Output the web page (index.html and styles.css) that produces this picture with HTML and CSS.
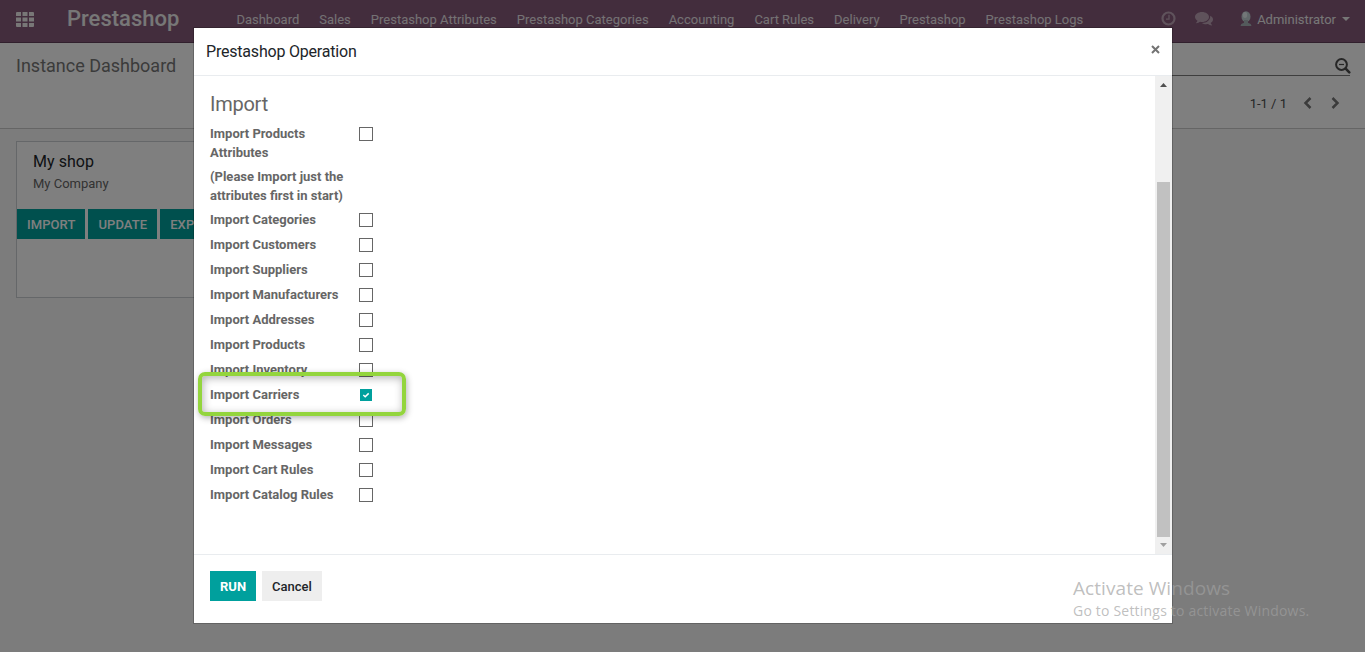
FILE: index.html
```html
<!DOCTYPE html>
<html lang="en">
<head>
<meta charset="utf-8">
<title>Prestashop</title>
<link rel="stylesheet" href="styles.css">
</head>
<body>
<div class="app">
  <header class="navbar">
    <svg class="apps" width="18" height="15" viewBox="0 0 18 15"><path d="M0 1a1 1 0 0 1 1-1h4v4H0zM6.500 0h5v4h-5zM13 0h4a1 1 0 0 1 1 1v3h-5zM0 5.500h5v4H0zM6.500 5.500h5v4h-5zM13 5.500h5v4h-5zM0 11h5v4H1a1 1 0 0 1-1-1zM6.500 11h5v4h-5zM13 11h5v3a1 1 0 0 1-1 1h-4z"/></svg>
    <div class="brand">Prestashop</div>
    <nav class="menu">
      <a>Dashboard</a><a>Sales</a><a>Prestashop Attributes</a><a>Prestashop Categories</a><a>Accounting</a><a>Cart Rules</a><a>Delivery</a><a>Prestashop</a><a>Prestashop Logs</a>
    </nav>
    <div class="systray">
      <svg class="clock" width="15" height="15" viewBox="0 0 15 15"><circle cx="7.500" cy="7.500" r="6" fill="none" stroke-width="2.200"/><path d="M8 3.800v4.400H5" fill="none" stroke-width="1.300"/></svg>
      <svg class="chat" width="18" height="14" viewBox="0 0 18 14"><path d="M7 0c3.900 0 7 2.200 7 5s-3.100 5-7 5c-.7 0-1.300-.1-1.900-.2C4 10.600 2.700 11.100 1.300 11.300c-.3 0-.4-.3-.2-.5.600-.6 1.100-1.200 1.400-2.100C1 7.800 0 6.500 0 5c0-2.800 3.100-5 7-5z"/><path d="M15.200 3.800c1.700.8 2.800 2.100 2.800 3.700 0 1.400-.9 2.700-2.400 3.600.3.800.8 1.400 1.400 2 .2.200 0 .5-.3.500-1.400-.2-2.600-.7-3.700-1.500-2.200.4-4.600 0-6.200-1.100 4.700.1 8.700-2.500 8.400-7.200z"/></svg>
      <svg class="avatar" width="12" height="16" viewBox="0 0 12 16"><ellipse cx="6" cy="5.700" rx="4.500" ry="5.500" fill="#c3d0d5"/><path d="M4 9h4v2.800l2.700 1.200.8 2H.5l.8-2L4 11.800z" fill="#a9b4b9"/><ellipse cx="5" cy="4" rx="2.200" ry="3" fill="#e6eef0"/></svg>
      <span class="user">Administrator</span>
      <svg class="caret" width="8" height="4" viewBox="0 0 8 4"><path d="M0 0h8L4 4z"/></svg>
    </div>
  </header>
  <section class="panel">
    <div class="crumb">Instance Dashboard</div>
    <div class="tools">
      <div class="search">
        <svg width="16" height="16" viewBox="0 0 16 16"><g fill="none" stroke="#4c4c4c"><circle cx="6.500" cy="6.500" r="5.400" stroke-width="2"/><path d="M10.700 10.700l3.600 3.600" stroke-width="2.600" stroke-linecap="round"/><path d="M4 6.500h5" stroke-width="1.200"/></g></svg>
      </div>
      <div class="pager"><span>1-1 / 1</span>
        <svg class="prev" width="9" height="12" viewBox="0 0 9 12"><path d="M7.500 1l-5 5 5 5"/></svg>
        <svg class="next" width="9" height="12" viewBox="0 0 9 12"><path d="M1.500 1l5 5-5 5"/></svg>
      </div>
    </div>
  </section>
  <main class="content">
    <article class="shop">
      <h2>My shop</h2>
      <p>My Company</p>
      <div class="actions"><button>IMPORT</button><button>UPDATE</button><button>EXPORT</button></div>
    </article>
  </main>
</div>

<div class="backdrop">
  <div class="modal">
    <div class="modal-head"><h1>Prestashop Operation</h1>
      <svg width="9" height="9" viewBox="0 0 9 9"><path d="M1 1l7 7M8 1L1 8"/></svg>
    </div>
    <div class="modal-body">
      <div class="form">
        <h3>Import</h3>
        <div class="row tall"><label>Import Products<br>Attributes</label><i class="box"></i></div>
        <div class="row tall"><label>(Please Import just the<br>attributes first in start)</label></div>
        <div class="row"><label>Import Categories</label><i class="box"></i></div>
        <div class="row"><label>Import Customers</label><i class="box"></i></div>
        <div class="row"><label>Import Suppliers</label><i class="box"></i></div>
        <div class="row"><label>Import Manufacturers</label><i class="box"></i></div>
        <div class="row"><label>Import Addresses</label><i class="box"></i></div>
        <div class="row"><label>Import Products</label><i class="box"></i></div>
        <div class="row"><label>Import Inventory</label><i class="box"></i></div>
        <div class="row marked"><label>Import Carriers</label><i class="box checked"><svg width="12" height="12" viewBox="0 0 12 12"><path d="M3.300 6l1.900 1.700 3.500-3.300"/></svg></i><div class="highlight"></div></div>
        <div class="row"><label>Import Orders</label><i class="box"></i></div>
        <div class="row"><label>Import Messages</label><i class="box"></i></div>
        <div class="row"><label>Import Cart Rules</label><i class="box"></i></div>
        <div class="row"><label>Import Catalog Rules</label><i class="box"></i></div>
      </div>
      <div class="scrollbar">
        <svg width="7" height="4" viewBox="0 0 7 4" fill="#505050"><path d="M0 4h7L3.500 0z"/></svg>
        <div class="thumb"></div>
        <svg width="7" height="4" viewBox="0 0 7 4" fill="#a0a0a0"><path d="M0 0h7L3.500 4z"/></svg>
      </div>
    </div>
    <div class="modal-foot"><button class="run">RUN</button><button class="cancel">Cancel</button></div>
  </div>
</div>
<div class="watermark"><div class="big">Activate Windows</div><div class="small">Go to Settings to activate Windows.</div></div>
</body>
</html>
```
FILE: styles.css
```css
* { box-sizing: border-box; }
body { margin: 0; width: 1365px; height: 652px; overflow: hidden; font: 13px/19.500px Roboto, sans-serif; color: #666; }
h1, h2, h3, p { margin: 0; font-weight: 400; }
button { border: 0; font: 500 13px/29px Roboto, sans-serif; padding: 1px 10px 0; height: 30px; white-space: nowrap; }
svg { display: block; flex: none; }
.app { height: 652px; display: flex; flex-direction: column; background: #f9f9f9; }
.navbar { height: 43px; flex: none; background: #875a7b; border-bottom: 1px solid #62405a; display: flex; color: #fff; padding-left: 16px; line-height: 39px; white-space: nowrap; }
.apps { margin: 12px 33px 0 0; fill: #f0eeef; }
.brand { width: 159.400px; font-size: 22px; font-weight: 500; color: #eee; line-height: 38px; }
.menu { display: flex; color: #e9e4e8; }
.menu a { padding: 0 10px; }
.systray { margin-left: auto; padding-right: 15px; display: flex; color: #eee; }
.clock { margin: 11px 19px 0 0; stroke: #bea5b7; }
.chat { margin: 12px 27px 0 0; fill: #bea5b7; }
.avatar { margin: 11px 5px 0 0; }
.caret { margin: 17px 0 0 6px; fill: #eee; }
.panel { height: 86px; flex: none; background: #fff; border-bottom: 1px solid #cacaca; display: flex; justify-content: space-between; }
.crumb { padding: 11px 0 0 16px; font-size: 18px; line-height: 24px; color: #777; }
.tools { width: 668px; padding-right: 15px; }
.search { height: 33px; border-bottom: 1px solid #7c7c7c; display: flex; justify-content: flex-end; padding-top: 15px; }
.search svg { margin-right: -1px; }
.pager { display: flex; justify-content: flex-end; padding: 18px 10px 0 0; color: #4c4c4c; }
.pager svg { fill: none; stroke: #777; stroke-width: 2.500; }
.pager .prev { margin: 3px 19px 0 16px; }
.pager .next { margin-top: 3px; }
.content { flex: 1; padding: 12px 16px; }
.shop { width: 320px; height: 157px; border: 1px solid #cbced2; background: #fff; }
.shop h2 { padding: 9px 16px 0; font-size: 16px; line-height: 22px; letter-spacing: .05px; color: #212529; }
.shop p { padding: 1px 16px 0; }
.actions { display: flex; gap: 3px; margin-top: 15px; }
.actions button { background: #00a09d; color: #fff; letter-spacing: .08px; }
.backdrop { position: absolute; inset: 0; background: rgba(0,0,0,.5); display: flex; align-items: flex-start; padding: 28px 0 0 194px; }
.modal { width: 978px; height: 595px; background: #fff; box-shadow: 0 0 0 1px rgba(0,0,0,.2); display: flex; flex-direction: column; }
.modal-head { height: 48px; flex: none; border-bottom: 1px solid #e9ecef; display: flex; justify-content: space-between; padding: 0 12px; }
.modal-head h1 { font-size: 16px; line-height: 47px; letter-spacing: -.2px; color: #212529; }
.modal-head svg { margin-top: 17px; stroke: #737373; stroke-width: 2; }
.modal-body { height: 478px; flex: none; display: flex; justify-content: space-between; }
.form { padding: 14px 16px 0; }
.form h3 { font-size: 20px; line-height: 28px; letter-spacing: -.25px; margin-bottom: 3px; }
.row { height: 25px; display: grid; grid-template-columns: 149px 20px; align-items: start; line-height: 25px; font-weight: 700; white-space: nowrap; }
.row.tall { height: 43px; line-height: 19px; padding-top: 3px; }
.box { width: 14px; height: 14px; border: 1px solid #666; margin-top: 6px; background: #fff; }
.tall .box { margin-top: 3px; }
.box.checked { border: 0; width: 12px; height: 12px; margin: 7px 0 0 1px; background: #00a09d; }
.checked path { fill: none; stroke: #fff; stroke-width: 1.500; }
.marked { position: relative; }
.highlight { position: absolute; left: -12px; top: -10.500px; width: 208px; height: 44px; border: 4px solid #93d53d; border-radius: 7px; box-shadow: 1px 2px 6px rgba(0,0,0,.3), inset 1px 2px 8px rgba(0,0,0,.3); }
.scrollbar { width: 17px; background: #f0f0f0; display: flex; flex-direction: column; align-items: center; justify-content: space-between; padding: 7px 0 7px; }
.thumb { width: 13px; height: 355px; margin-top: 88px; background: #c1c1c1; }
.modal-foot { flex: 1; border-top: 1px solid #e9ecef; display: flex; gap: 6px; padding: 16px; }
.run { background: #00a09d; color: #fff; font-weight: 700; }
.cancel { background: #eee; color: #212529; font-weight: 500; }
.watermark { position: absolute; left: 1073px; top: 577px; font-family: "Open Sans", "Noto Sans", sans-serif; color: rgba(160,160,160,.68); white-space: nowrap; }
.big { font-size: 19px; line-height: 23px; letter-spacing: .07px; }
.small { font-size: 14px; line-height: 22px; letter-spacing: .2px; }
```
